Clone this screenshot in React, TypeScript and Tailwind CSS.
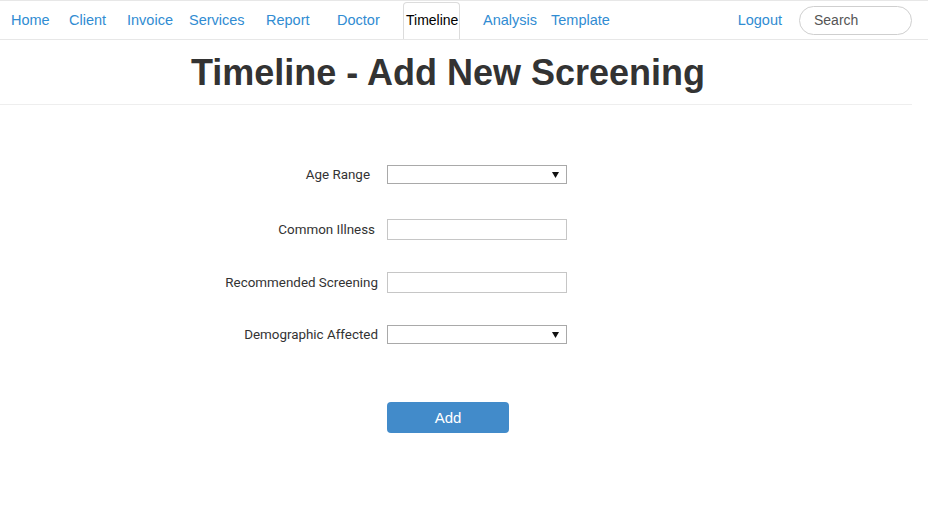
import React from "react";

const navLink = "text-[#318cd2] text-[14.5px] leading-[20px] pt-[9px] pb-[9px] whitespace-nowrap";

function Select() {
  return (
    <div className="relative w-[180px] h-[19px] border border-[#a9a9a9] bg-white">
      <svg className="absolute right-[7px] top-[6px]" width="7" height="6" viewBox="0 0 7 6">
        <path d="M0 0 H7 L3.5 6 Z" fill="#111" />
      </svg>
    </div>
  );
}

function Input() {
  return <div className="w-[180px] h-[21px] border border-[#c6c6c6] bg-white" />;
}

export default function App() {
  const labelCls = "text-[13.4px] text-[#333] whitespace-nowrap pt-[2px]";
  return (
    <div className="w-[928px] h-[522px] bg-white overflow-hidden" style={{ fontFamily: '"Liberation Sans", Arial, sans-serif' }}>
      {/* nav */}
      <div className="flex h-[40px] border-t border-b border-[#e7e7e7]">
        <a className={navLink + " ml-[11px] w-[58px]"}>Home</a>
        <a className={navLink + " w-[58px]"}>Client</a>
        <a className={navLink + " w-[62px]"}>Invoice</a>
        <a className={navLink + " w-[77px]"}>Services</a>
        <a className={navLink + " w-[71px]"}>Report</a>
        <a className={navLink + " w-[66px]"}>Doctor</a>
        <div className="w-[57px] mt-[1px] border border-b-0 border-[#dcdcdc] rounded-t-[4px] pl-[2px] pt-[7px] pb-[9px] text-[14px] leading-[20px] text-black bg-white whitespace-nowrap">
          Timeline
        </div>
        <a className={navLink + " ml-[23px] w-[68px]"}>Analysis</a>
        <a className={navLink}>Template</a>
        <div className="flex-1" />
        <a className={navLink}>Logout</a>
        <div className="ml-[17px] mr-[16px] mt-[5px] w-[113px] h-[29px] rounded-full border border-[#cfcfcf] pl-[14px] text-[14px] leading-[27px] text-[#555]">
          Search
        </div>
      </div>

      {/* title */}
      <div className="w-[912px] pr-[16px] pt-[13px] pb-[11px] border-b border-[#eeeeee]">
        <h1 className="text-center text-[36px] leading-[40px] font-bold text-[#333]">Timeline - Add New Screening</h1>
      </div>

      {/* form */}
      <div style={{ fontFamily: 'Roboto, "Liberation Sans", sans-serif' }}>
        <div className="flex items-center h-[21px] mt-[59px]">
          <div className={"w-[387px] text-right pr-[17px] " + labelCls}>Age Range</div>
          <Select />
        </div>
        <div className="flex items-center h-[21px] mt-[34px]">
          <div className={"w-[387px] text-right pr-[12px] " + labelCls}>Common Illness</div>
          <Input />
        </div>
        <div className="flex items-center h-[21px] mt-[32px]">
          <div className={"w-[387px] text-right pr-[9px] " + labelCls}>Recommended Screening</div>
          <Input />
        </div>
        <div className="flex items-center h-[21px] mt-[31px]">
          <div className={"w-[387px] text-right pr-[9px] " + labelCls}>Demographic Affected</div>
          <Select />
        </div>
      </div>
      <div className="flex mt-[57px]">
        <div className="w-[387px]" />
        <div className="w-[122px] h-[31px] rounded-[4px] bg-[#428bca] text-white text-[15px] leading-[31px] text-center">
          Add
        </div>
      </div>
    </div>
  );
}
